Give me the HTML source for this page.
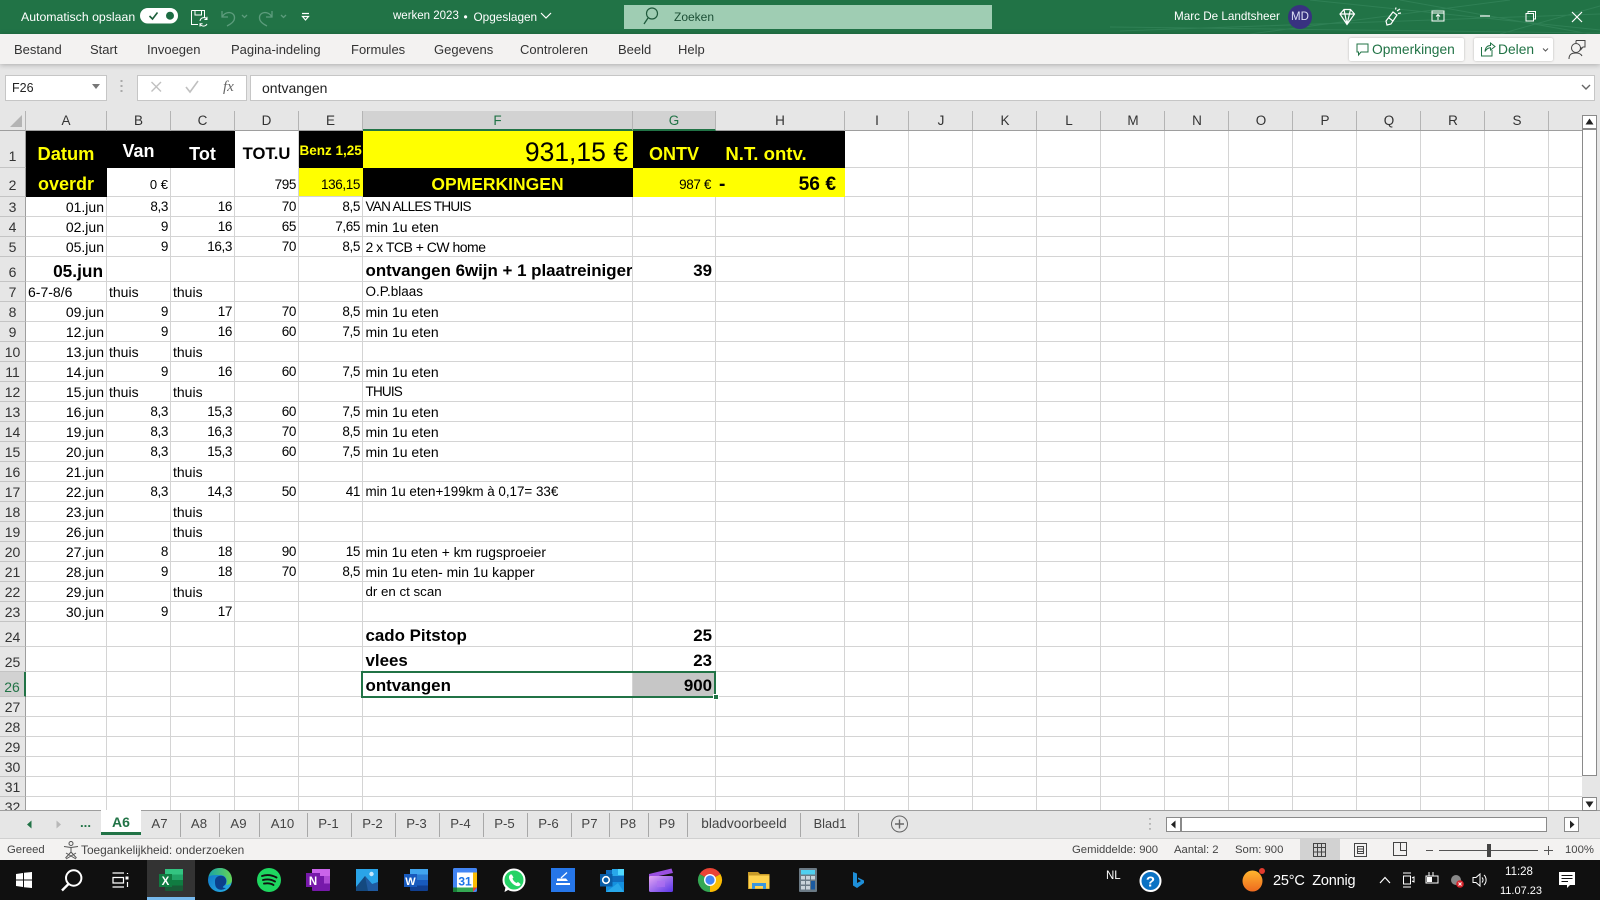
<!DOCTYPE html>
<html lang="nl">
<head>
<meta charset="utf-8">
<title>werken 2023 - Excel</title>
<style>
*{box-sizing:border-box}
html,body{margin:0;padding:0;width:1600px;height:900px;overflow:hidden;background:#e6e6e6;font-family:"Liberation Sans",sans-serif;color:#000}
.a{position:absolute;white-space:nowrap}
#title{position:absolute;left:0;top:0;width:1600px;height:34px;background:#217346;color:#fff;font-size:12.3px}
#ribbon{position:absolute;left:0;top:34px;width:1600px;height:30px;background:#f3f2f1;box-shadow:0 1px 5px rgba(0,0,0,.25);font-size:13px;color:#333;z-index:2}
#ribbon .a{top:8px}
.btn{position:absolute;top:3.5px;height:23px;background:#fff;border-radius:2px;box-shadow:0 0 2px rgba(0,0,0,.25);color:#217346;font-size:13.8px;line-height:23px}
#fbar{position:absolute;left:0;top:64px;width:1600px;height:47px;background:#e6e6e6}
.box{position:absolute;top:11px;height:26px;background:#fff;border:1px solid #c6c6c6}
#grid{position:absolute;left:0;top:111px;width:1582px;height:699px;overflow:hidden;background:#fff}
table{border-collapse:separate;border-spacing:0;table-layout:fixed;width:1582px}
td,th{padding:0 2px;overflow:hidden;white-space:nowrap;font-weight:normal}
td{border-right:1px solid #d4d4d4;border-bottom:1px solid #d4d4d4;font-size:13.5px;letter-spacing:-.38px;text-align:right;vertical-align:middle;line-height:16px}
thead th{height:20px;background:#e6e6e6;border-right:1px solid #b4b4b4;border-bottom:1px solid #9e9e9e;font-size:13.5px;color:#333;text-align:center;line-height:18px}
tbody th{background:#e6e6e6;border-right:1px solid #9e9e9e;border-bottom:1px solid #c4c4c4;font-size:14px;color:#333;text-align:center;line-height:16px;padding:0}
tr.h25 th{padding-top:5px}
thead th.s{background:#d2d2d2;color:#217346;border-bottom:2px solid #217346;border-right-color:#b4b4b4}
thead th.s span{position:relative;top:1px}
tbody th.s{background:#d2d2d2;color:#217346;border-right:2px solid #217346}
.r{background:repeating-linear-gradient(to right,transparent 0,transparent 63px,#d4d4d4 63px,#d4d4d4 64px);border-right:0}
tr{height:20px}
tr.h25{height:25px}
.t{font-size:14px;letter-spacing:0}
.l{text-align:left;font-size:14px;padding-left:2.5px;letter-spacing:0}
.b{font-weight:bold;font-size:16.9px;padding-top:4px;letter-spacing:0}
.bk{background:#000;border-color:#000}
.yl{background:#ffff00;border-color:#ffff00}
.yt{color:#ffff00;font-weight:bold;letter-spacing:0}
.wt{color:#fff;font-weight:bold;letter-spacing:0}
.c{text-align:center}
#tabs{position:absolute;left:0;top:810px;width:1600px;height:28px;background:#e6e6e6;border-top:1px solid #9e9e9e;font-size:13.2px;color:#444}
#tabs .tab{position:absolute;top:2px;height:24px;line-height:22px;text-align:center;border-right:1px solid #a8a8a8;padding-right:2px}
#status{position:absolute;left:0;top:838px;width:1600px;height:22px;background:#f3f2f1;border-top:1px solid #d0d0d0;font-size:11.3px;color:#444;line-height:23px}
#taskbar{position:absolute;left:0;top:860px;width:1600px;height:40px;background:#101010;color:#fff}
svg{position:absolute;left:0;top:0;overflow:visible}
</style>
</head>
<body>

<div id="title">
<svg width="1600" height="34" fill="none" stroke="#2f8055" stroke-width="1">
<path d="M1110 27 L1600 33 M1120 31 L1600 14 M1310 0 L1600 30 M1400 0 L1590 34 M1250 34 L1510 0 M1500 34 L1600 6"/>
</svg>
<div class="a" style="left:21px;top:10px">Automatisch opslaan</div>
<svg width="400" height="34" fill="none">
<rect x="140" y="8" width="38" height="15.5" rx="7.75" fill="#fff"/>
<path d="M149.5 16 L152.5 19 L157.5 12.5" stroke="#1c5e3a" stroke-width="1.6"/>
<circle cx="170" cy="15.7" r="4" fill="#1c6b42"/>
<path d="M191.5 10.5 H204.5 V18 M191.5 10.5 V24.5 H198 M195 10.5 V15 H201.5 V10.5" stroke="#fff" stroke-width="1"/>
<path d="M200 21 a4 4 0 0 1 7 -2 M207 24 a4 4 0 0 1 -7 0 M207 16.8 V19.5 H204.4 M200 26.5 V23.8 H202.6" stroke="#fff" stroke-width="1"/>
<g stroke="#5c9c7c" stroke-width="1.3">
<path d="M222 11 V17 H228 M222 17 C226 10 235 12 234.5 18 C234.5 21 231 24 227 26"/>
<path d="M242 15 L244.5 17.5 L247 15"/>
<path d="M272 11 V17 H266 M272 17 C268 10 259 12 259.5 18 C259.5 21 263 24 267 26"/>
<path d="M281 15 L283.5 17.5 L286 15"/>
</g>
<path d="M302 13.5 H309 M302.5 16.5 L305.5 20 L308.5 16.5 Z" stroke="#fff" stroke-width="1.2"/>
</svg>
<div class="a" style="left:393px;top:10px;font-size:11.5px">werken 2023</div>
<div class="a" style="left:463.5px;top:10px;font-size:11.8px">•</div>
<div class="a" style="left:473.5px;top:10px;font-size:11.8px">Opgeslagen</div>
<svg width="600" height="34" fill="none"><path d="M541 13 L546 18 L551 13" stroke="#fff" stroke-width="1.2"/></svg>
<div class="a" style="left:624px;top:5px;width:368px;height:24px;background:#9fcdb3"></div>
<svg width="700" height="34" fill="none"><circle cx="652" cy="13.5" r="5.5" stroke="#1f5a3c" stroke-width="1.2"/><path d="M648 18 L644 24" stroke="#1f5a3c" stroke-width="1.3"/></svg>
<div class="a" style="left:674px;top:10px;color:#1c4f36;font-size:12px">Zoeken</div>
<div class="a" style="left:1174px;top:10px;font-size:11.7px">Marc De Landtsheer</div>
<div class="a" style="left:1288px;top:5px;width:24px;height:24px;border-radius:50%;background:#383280;color:#dfe0f5;font-size:11.5px;line-height:24px;text-align:center">MD</div>
<svg width="1600" height="34" fill="none" stroke="#fff" stroke-width="1.2">
<path d="M1340 14 L1344 9.5 H1350.5 L1354.5 14 L1347 24.5 Z M1340 14 H1354.5 M1344 9.5 L1347 24.5 L1350.5 9.5"/>
<path d="M1386 21 L1393 12 L1397 15 L1391 24 L1387 25 Z M1389 18 L1393 21 M1397 11 L1400 9 M1398 13.5 L1401 13 M1395.5 9.5 L1396 7.5"/>
<path d="M1432 11 H1444 V21 H1432 Z M1432 13 H1444 M1438 20 V15 M1436 16.5 L1438 14.5 L1440 16.5" stroke-width="1"/>
<path d="M1480 16 H1490"/>
<path d="M1526 13.5 H1533.5 V21 H1526 Z M1528 13.5 V11.5 H1535.5 V19 H1533.5" stroke-width="1"/>
<path d="M1572 12 L1582 22 M1582 12 L1572 22"/>
</svg>
</div>

<div id="ribbon">
<div class="a" style="left:14px">Bestand</div>
<div class="a" style="left:90px">Start</div>
<div class="a" style="left:147px">Invoegen</div>
<div class="a" style="left:231px">Pagina-indeling</div>
<div class="a" style="left:351px">Formules</div>
<div class="a" style="left:434px">Gegevens</div>
<div class="a" style="left:520px">Controleren</div>
<div class="a" style="left:618px">Beeld</div>
<div class="a" style="left:678px">Help</div>
<div class="btn" style="left:1349px;width:115px;padding-left:23px">Opmerkingen</div>
<div class="btn" style="left:1474px;width:79px;padding-left:24px">Delen</div>
<svg width="1600" height="30" fill="none" stroke-width="1">
<path d="M1357 10 H1368 V18 H1361 L1358.5 21 V18 H1357 Z" stroke="#217346"/>
<path d="M1481.5 13 V22 H1492 V16 M1485 17.5 C1485.5 13 1488 11.5 1490.5 11.5 V9 L1495 12.5 L1490.5 16 V13.8 C1488.5 13.8 1486.5 15 1485 17.5 Z" stroke="#217346"/>
<path d="M1543 14.5 L1545.5 17 L1548 14.5" stroke="#555"/>
<g stroke="#444"><circle cx="1576" cy="14" r="4.5"/><path d="M1569 25 C1569 20 1572 19 1576 19 C1579 19 1581 20 1582 22 M1576 6.5 H1585 V13 H1583 L1581 15.5 V13 M1576 6.5 V9"/></g>
</svg>
</div>

<div id="fbar">
<div class="box" style="left:5px;width:102px"></div>
<div class="a" style="left:12px;top:16.5px;font-size:12.5px;color:#222">F26</div>
<div class="box" style="left:137px;width:110px"></div>
<div class="box" style="left:250px;width:1345px"></div>
<div class="a" style="left:262px;top:16px;font-size:14px;color:#222">ontvangen</div>
<div class="a" style="left:223px;top:15px;font:italic 15px 'Liberation Serif',serif;color:#666">fx</div>
<svg width="1600" height="47" fill="none">
<path d="M92 20 H100 L96 25 Z" fill="#777"/>
<path d="M121.5 16 v2 M121.5 21 v2 M121.5 26 v2" stroke="#aaa" stroke-width="2"/>
<path d="M151.5 18 L161 27.5 M161 18 L151.5 27.5" stroke="#c0c0c0" stroke-width="1.4"/>
<path d="M186 23 L190 28 L198 17" stroke="#c0c0c0" stroke-width="1.6"/>
<path d="M1582 21 L1586 25 L1590 21" stroke="#666" stroke-width="1.4"/>
</svg>
</div>

<div id="grid">
<table>
<colgroup><col style="width:26px"><col style="width:81px"><col style="width:64px"><col style="width:64px"><col style="width:64px"><col style="width:64px"><col style="width:270px"><col style="width:83px"><col style="width:129px"><col style="width:737px"></colgroup>
<thead><tr>
<th></th><th>A</th><th>B</th><th>C</th><th>D</th><th>E</th><th class="s"><span>F</span></th><th class="s"><span>G</span></th><th>H</th>
<th style="padding:0;border-right:0;text-align:left;background:repeating-linear-gradient(to right,#e6e6e6 0,#e6e6e6 63px,#b4b4b4 63px,#b4b4b4 64px)"><div style="display:flex;width:704px;line-height:18px"><span style="width:64px;text-align:center">I</span><span style="width:64px;text-align:center">J</span><span style="width:64px;text-align:center">K</span><span style="width:64px;text-align:center">L</span><span style="width:64px;text-align:center">M</span><span style="width:64px;text-align:center">N</span><span style="width:64px;text-align:center">O</span><span style="width:64px;text-align:center">P</span><span style="width:64px;text-align:center">Q</span><span style="width:64px;text-align:center">R</span><span style="width:64px;text-align:center">S</span></div></th>
</tr></thead>
<tbody>
<tr style="height:37px"><th style="padding-top:14px">1</th>
<td class="bk yt c" style="font-size:18.3px;padding-top:10px">Datum</td>
<td class="bk wt c" style="font-size:18px;padding-top:4px">Van</td>
<td class="bk wt c" style="font-size:18px;padding-top:10px">Tot</td>
<td class="c" style="font-size:16.6px;font-weight:bold;padding-top:10px;border-bottom-color:#fff;letter-spacing:0">TOT.U</td>
<td class="bk yt" style="font-size:13.5px;text-align:left;padding:3px 0 0 .5px">Benz 1,25</td>
<td class="yl" style="font-size:26.5px;padding:6px 4px 0 0;line-height:30px;letter-spacing:0">931,15 €</td>
<td class="bk yt c" style="font-size:18px;padding-top:10px">ONTV</td>
<td class="bk yt c" style="font-size:18.6px;padding:10px 28px 0 0">N.T. ontv.</td>
<td class="r"></td></tr>
<tr style="height:29px"><th style="padding-top:6px">2</th>
<td class="bk yt c" style="font-size:18px;padding-top:4px">overdr</td>
<td style="padding-top:6px;font-size:13px;letter-spacing:0">0 €</td>
<td></td>
<td style="padding-top:5px">795</td>
<td class="yl" style="padding-top:5px;border-bottom-color:#d4d4d4">136,15</td>
<td class="bk yt c" style="font-size:17.5px;padding-top:4px">OPMERKINGEN</td>
<td class="yl" style="padding:5px 4px 0 0">987 €</td>
<td class="yl" style="font-size:19.2px;font-weight:bold;padding:6px 8px 0 0;letter-spacing:0"><span style="float:left;padding-left:3px">-</span>56 €</td>
<td class="r"></td></tr>
<tr><th>3</th><td class="t">01.jun</td><td>8,3</td><td>16</td><td>70</td><td>8,5</td><td class="l" style="font-size:13.5px;letter-spacing:-.7px">VAN ALLES THUIS</td><td></td><td></td><td class="r"></td></tr>
<tr><th>4</th><td class="t">02.jun</td><td>9</td><td>16</td><td>65</td><td>7,65</td><td class="l">min 1u eten</td><td></td><td></td><td class="r"></td></tr>
<tr><th>5</th><td class="t">05.jun</td><td>9</td><td>16,3</td><td>70</td><td>8,5</td><td class="l" style="letter-spacing:-.5px">2 x TCB + CW home</td><td></td><td></td><td class="r"></td></tr>
<tr class="h25"><th>6</th><td class="b" style="font-size:17.3px;padding-right:3px">05.jun</td><td></td><td></td><td></td><td></td><td class="l b">ontvangen 6wijn + 1 plaatreiniger</td><td class="b" style="padding-right:3px">39</td><td></td><td class="r"></td></tr>
<tr><th>7</th><td class="l" style="padding-left:2px">6-7-8/6</td><td class="l" style="padding-left:2px">thuis</td><td class="l" style="padding-left:2px">thuis</td><td></td><td></td><td class="l" style="font-size:13.5px">O.P.blaas</td><td></td><td></td><td class="r"></td></tr>
<tr><th>8</th><td class="t">09.jun</td><td>9</td><td>17</td><td>70</td><td>8,5</td><td class="l">min 1u eten</td><td></td><td></td><td class="r"></td></tr>
<tr><th>9</th><td class="t">12.jun</td><td>9</td><td>16</td><td>60</td><td>7,5</td><td class="l">min 1u eten</td><td></td><td></td><td class="r"></td></tr>
<tr><th>10</th><td class="t">13.jun</td><td class="l" style="padding-left:2px">thuis</td><td class="l" style="padding-left:2px">thuis</td><td></td><td></td><td></td><td></td><td></td><td class="r"></td></tr>
<tr><th>11</th><td class="t">14.jun</td><td>9</td><td>16</td><td>60</td><td>7,5</td><td class="l">min 1u eten</td><td></td><td></td><td class="r"></td></tr>
<tr><th>12</th><td class="t">15.jun</td><td class="l" style="padding-left:2px">thuis</td><td class="l" style="padding-left:2px">thuis</td><td></td><td></td><td class="l" style="font-size:13.5px;letter-spacing:-.8px">THUIS</td><td></td><td></td><td class="r"></td></tr>
<tr><th>13</th><td class="t">16.jun</td><td>8,3</td><td>15,3</td><td>60</td><td>7,5</td><td class="l">min 1u eten</td><td></td><td></td><td class="r"></td></tr>
<tr><th>14</th><td class="t">19.jun</td><td>8,3</td><td>16,3</td><td>70</td><td>8,5</td><td class="l">min 1u eten</td><td></td><td></td><td class="r"></td></tr>
<tr><th>15</th><td class="t">20.jun</td><td>8,3</td><td>15,3</td><td>60</td><td>7,5</td><td class="l">min 1u eten</td><td></td><td></td><td class="r"></td></tr>
<tr><th>16</th><td class="t">21.jun</td><td></td><td class="l" style="padding-left:2px">thuis</td><td></td><td></td><td></td><td></td><td></td><td class="r"></td></tr>
<tr><th>17</th><td class="t">22.jun</td><td>8,3</td><td>14,3</td><td>50</td><td>41</td><td class="l" style="font-size:13.4px">min 1u eten+199km à 0,17= 33€</td><td></td><td></td><td class="r"></td></tr>
<tr><th>18</th><td class="t">23.jun</td><td></td><td class="l" style="padding-left:2px">thuis</td><td></td><td></td><td></td><td></td><td></td><td class="r"></td></tr>
<tr><th>19</th><td class="t">26.jun</td><td></td><td class="l" style="padding-left:2px">thuis</td><td></td><td></td><td></td><td></td><td></td><td class="r"></td></tr>
<tr><th>20</th><td class="t">27.jun</td><td>8</td><td>18</td><td>90</td><td>15</td><td class="l" style="font-size:13.85px">min 1u eten + km rugsproeier</td><td></td><td></td><td class="r"></td></tr>
<tr><th>21</th><td class="t">28.jun</td><td>9</td><td>18</td><td>70</td><td>8,5</td><td class="l" style="font-size:13.9px">min 1u eten- min 1u kapper</td><td></td><td></td><td class="r"></td></tr>
<tr><th>22</th><td class="t">29.jun</td><td></td><td class="l" style="padding-left:2px">thuis</td><td></td><td></td><td class="l" style="font-size:13.3px">dr en ct scan</td><td></td><td></td><td class="r"></td></tr>
<tr><th>23</th><td class="t">30.jun</td><td>9</td><td>17</td><td></td><td></td><td></td><td></td><td></td><td class="r"></td></tr>
<tr class="h25"><th>24</th><td></td><td></td><td></td><td></td><td></td><td class="l b">cado Pitstop</td><td class="b" style="padding-right:3px">25</td><td></td><td class="r"></td></tr>
<tr class="h25"><th>25</th><td></td><td></td><td></td><td></td><td></td><td class="l b">vlees</td><td class="b" style="padding-right:3px">23</td><td></td><td class="r"></td></tr>
<tr class="h25"><th class="s">26</th><td></td><td></td><td></td><td></td><td></td><td class="l b" style="padding-top:4px">ontvangen</td><td class="b" style="padding:4px 3px 0 2px;background:#c6c6c6">900</td><td></td><td class="r"></td></tr>
<tr><th>27</th><td></td><td></td><td></td><td></td><td></td><td></td><td></td><td></td><td class="r"></td></tr>
<tr><th>28</th><td></td><td></td><td></td><td></td><td></td><td></td><td></td><td></td><td class="r"></td></tr>
<tr><th>29</th><td></td><td></td><td></td><td></td><td></td><td></td><td></td><td></td><td class="r"></td></tr>
<tr><th>30</th><td></td><td></td><td></td><td></td><td></td><td></td><td></td><td></td><td class="r"></td></tr>
<tr><th>31</th><td></td><td></td><td></td><td></td><td></td><td></td><td></td><td></td><td class="r"></td></tr>
<tr><th>32</th><td></td><td></td><td></td><td></td><td></td><td></td><td></td><td></td><td class="r"></td></tr>
</tbody>
</table>
<svg width="40" height="24" style="left:0;top:0"><path d="M22 4 V16 H10 Z" fill="#b4b4b4"/></svg>
<div class="a" style="left:361px;top:560px;width:355px;height:26.5px;border:2px solid #217346;background:transparent"></div>
<div class="a" style="left:713px;top:583px;width:6px;height:6px;background:#217346;border:1px solid #fff"></div>
</div>

<div class="a" style="left:1582px;top:111px;width:18px;height:699px;background:#e6e6e6"></div>
<svg width="1600" height="900" fill="none" style="z-index:1;pointer-events:none">
<rect x="1582.5" y="115.5" width="14" height="13" fill="#fff" stroke="#8a8a8a"/>
<path d="M1585.5 124.5 H1593.5 L1589.5 118.5 Z" fill="#222"/>
<rect x="1582.5" y="129.5" width="14" height="646" fill="#fff" stroke="#8a8a8a"/>
<rect x="1582.5" y="797.5" width="14" height="13" fill="#fff" stroke="#8a8a8a"/>
<path d="M1585.5 801.5 H1593.5 L1589.5 807.5 Z" fill="#222"/>
</svg>

<div id="tabs">
<svg width="1600" height="28" fill="none">
<path d="M31.5 9.5 V17.5 L27 13.5 Z" fill="#217346"/>
<path d="M56.5 9.5 V17.5 L61 13.5 Z" fill="#b8b8b8"/>
<circle cx="899.5" cy="13" r="8" stroke="#666"/><path d="M895 13 H904 M899.5 8.5 V17.5" stroke="#666" stroke-width="1.4"/>
<path d="M1150 7 v1.8 M1150 12 v1.8 M1150 17 v1.8" stroke="#aaa" stroke-width="1.6"/>
<rect x="1166.5" y="6.5" width="14" height="14" fill="#fff" stroke="#8a8a8a"/><path d="M1175.5 9.5 V17.5 L1171 13.5 Z" fill="#222"/>
<rect x="1181.5" y="6.5" width="365" height="14" fill="#fff" stroke="#8a8a8a"/>
<rect x="1564.5" y="6.5" width="14" height="14" fill="#fff" stroke="#8a8a8a"/><path d="M1570 9.5 V17.5 L1574.5 13.5 Z" fill="#222"/>
</svg>
<div class="a" style="left:80px;top:4px;font-weight:bold;color:#217346">...</div>
<div class="a" style="left:101px;top:-1px;width:40px;height:25px;background:#fff;border-bottom:3px solid #217346;color:#217346;font-weight:bold;font-size:14px;text-align:center;line-height:25px">A6</div>
<div class="tab" style="left:141px;width:40px">A7</div>
<div class="tab" style="left:181px;width:39px">A8</div>
<div class="tab" style="left:220px;width:40px">A9</div>
<div class="tab" style="left:260px;width:48px">A10</div>
<div class="tab" style="left:308px;width:44px">P-1</div>
<div class="tab" style="left:352px;width:44px">P-2</div>
<div class="tab" style="left:396px;width:44px">P-3</div>
<div class="tab" style="left:440px;width:44px">P-4</div>
<div class="tab" style="left:484px;width:44px">P-5</div>
<div class="tab" style="left:528px;width:44px">P-6</div>
<div class="tab" style="left:572px;width:38px">P7</div>
<div class="tab" style="left:610px;width:39px">P8</div>
<div class="tab" style="left:649px;width:39px">P9</div>
<div class="tab" style="left:688px;width:113px;font-size:13.6px;padding-right:0">bladvoorbeeld</div>
<div class="tab" style="left:801px;width:58px;padding:0 0 0 1px;font-size:12.8px">Blad1</div>
</div>

<div id="status">
<div class="a" style="left:7px">Gereed</div>
<svg width="100" height="22" fill="none" stroke="#555"><circle cx="71" cy="4.5" r="2"/><path d="M64 7.5 L71 8.5 L78 7.5 M71 8.5 V13 L65.5 19 M71 13 L76.5 19 M66 14 L76 20 M76 14 L66 20" stroke-width="1"/></svg>
<div class="a" style="left:81px;font-size:11.9px">Toegankelijkheid: onderzoeken</div>
<div class="a" style="left:1072px">Gemiddelde: 900</div>
<div class="a" style="left:1174px">Aantal: 2</div>
<div class="a" style="left:1235px">Som: 900</div>
<div class="a" style="left:1300px;top:0;width:40px;height:21px;background:#d2d2d2"></div>
<svg width="1600" height="22" fill="none" stroke="#444">
<path d="M1313.5 4.5 H1325.5 V17.5 H1313.5 Z M1313.5 8.5 H1325.5 M1313.5 13 H1325.5 M1317.5 4.5 V17.5 M1321.5 4.5 V17.5"/>
<path d="M1354.5 4.5 H1366.5 V17.5 H1354.5 Z M1357.5 7.5 H1363.5 V14.5 H1357.5 Z M1358 10 H1363 M1358 12.5 H1363"/>
<path d="M1393.5 3.5 H1406.5 V16.5 H1393.5 Z M1400.5 3.5 V11.5 H1406.5"/>
<path d="M1426 11.5 H1433 M1439 11.5 H1538 M1544 11.5 H1553 M1548.5 7 V16" stroke="#555"/>
<rect x="1487" y="5" width="4" height="13" fill="#444" stroke="none"/>
</svg>
<div class="a" style="left:1565px">100%</div>
</div>

<div id="taskbar">
<div class="a" style="left:147px;top:0;width:48px;height:40px;background:#333;border-bottom:3px solid #76b9ed"></div>
<svg width="1600" height="40" fill="none">
<defs>
<linearGradient id="eg" x1="0" y1="0" x2="1" y2="1"><stop offset="0" stop-color="#0d6fc4"/><stop offset="1" stop-color="#29b2e6"/></linearGradient>
<linearGradient id="eg2" x1="0" y1="0" x2="1" y2="0"><stop offset="0" stop-color="#1aa3a6"/><stop offset="1" stop-color="#66d455"/></linearGradient>
<linearGradient id="ws" x1="0" y1="0" x2="0" y2="1"><stop offset="0" stop-color="#ffb52e"/><stop offset="1" stop-color="#ee6a1f"/></linearGradient>
<linearGradient id="cc" x1="0" y1="0" x2="1" y2="1"><stop offset="0" stop-color="#e6a6f4"/><stop offset="1" stop-color="#5a36e8"/></linearGradient>
</defs>
<path d="M16 14 L23 13 V19.5 H16 Z M24 12.8 L32 12 V19.5 H24 Z M16 20.5 H23 V27 L16 26 Z M24 20.5 H32 V28 L24 27.2 Z" fill="#fff"/>
<circle cx="73.7" cy="18" r="7.7" stroke="#fff" stroke-width="2"/><path d="M68.5 24 L62 30.5" stroke="#fff" stroke-width="2.4"/>
<path d="M112.5 13 H124 M112.5 27 H124 M113 17.5 H123.5 V23 H113 Z M127.5 13 V14 M127.5 22 V27" stroke="#fff" stroke-width="1.2"/><rect x="125.5" y="16.5" width="3" height="3" fill="#fff"/>
<rect x="165" y="9" width="18" height="22" rx="1" fill="#185c37"/><rect x="165" y="9" width="18" height="5.5" fill="#33c481"/><rect x="165" y="14.5" width="18" height="5.5" fill="#21a366"/><rect x="165" y="20" width="18" height="5.5" fill="#107c41"/><rect x="159" y="14" width="13" height="13" fill="#107c41"/>
<text x="165.5" y="25" fill="#fff" font-size="11.5" font-weight="bold" text-anchor="middle" font-family="Liberation Sans,sans-serif">X</text>
<circle cx="220" cy="20" r="12" fill="url(#eg)"/><path d="M208.5 17 C210 10 215 8 220 8 C227 8 232 13 232 20 C232 24 228 25 226 25 C228 20 226 15 220 15 C215 15 210 15 208.5 17 Z" fill="url(#eg2)"/><path d="M215 21 C215 17 219 15 223 16 C227 18 227 22 225 25 C222 27 222 28 226 28 C222 31 217 30 215.5 26 C215 24.5 215 22.5 215 21 Z" fill="#0b3f8c"/>
<circle cx="269" cy="20" r="12" fill="#1ed760"/><path d="M262 16 C266.5 14.5 272 15 276.5 17.5 M263 20 C267 19 271.5 19.5 275 21.5 M264 23.6 C267.5 23 271 23.3 273.5 25" stroke="#111" stroke-width="1.9" stroke-linecap="round"/>
<rect x="312" y="9" width="18" height="22" rx="1" fill="#7719aa"/><rect x="320" y="9" width="10" height="7" fill="#ca64ea"/><rect x="312" y="9" width="8" height="4" fill="#ca64ea"/><rect x="324" y="16" width="6" height="7.5" fill="#ae4bd5"/><rect x="306" y="13" width="14" height="14" fill="#7719aa"/>
<text x="313" y="24.8" fill="#fff" font-size="11.5" font-weight="bold" text-anchor="middle" font-family="Liberation Sans,sans-serif">N</text>
<rect x="356" y="9" width="22" height="22" fill="#2aa4e8"/><path d="M356 27 L365 16 L372 24 L378 27 V31 H356 Z" fill="#14497f"/><path d="M365 16 L372 24 L378 22 V31 H368 Z" fill="#1f5aa0"/><circle cx="371.5" cy="14" r="2.2" fill="#c6e7fb"/>
<rect x="410" y="9" width="18" height="22" rx="1" fill="#103f91"/><rect x="410" y="9" width="18" height="5.5" fill="#41a5ee"/><rect x="410" y="14.5" width="18" height="5.5" fill="#2b7cd3"/><rect x="410" y="20" width="18" height="5.5" fill="#185abd"/><rect x="404" y="14" width="13" height="13" fill="#185abd"/>
<text x="410.5" y="25" fill="#fff" font-size="11" font-weight="bold" text-anchor="middle" font-family="Liberation Sans,sans-serif">W</text>
<rect x="453" y="8" width="24" height="24" rx="1.5" fill="#4285f4"/><rect x="457" y="12.5" width="16" height="15" fill="#fff"/><rect x="473" y="12.5" width="4" height="15" fill="#fbbc04"/><rect x="457" y="27.5" width="16" height="4.5" fill="#34a853"/><rect x="453" y="27.5" width="4" height="4.5" fill="#188038"/><path d="M473 27.5 H477 L473 32 Z" fill="#ea4335"/>
<text x="465" y="25.5" fill="#1a73e8" font-size="12" font-weight="bold" text-anchor="middle" font-family="Liberation Sans,sans-serif">31</text>
<circle cx="514" cy="20" r="10.5" fill="#25d366" stroke="#fff" stroke-width="2"/><path d="M504.5 32 L506 25 L510 29 Z" fill="#fff"/><path d="M510.5 14.5 C509 15.5 508.5 17 509.5 19.5 C511 22.5 513.5 25 516.5 26 C519 26.5 520.5 25.5 520.5 24 L518 22 L516.5 23 C514.5 22 513 20.5 512.5 18.5 L513.5 17.5 L511.8 14.5 Z" fill="#fff"/>
<rect x="551" y="8" width="24" height="24" fill="#2676e8"/><path d="M556 23 H570 V25 H556 Z M557 18.5 H566 L568 21 H557 Z" fill="#fff"/><path d="M561 18 L567 12.5" stroke="#fff" stroke-width="1.2"/>
<path d="M606 10 H624 V22 L614 27 H606 Z" fill="#0f6cbd"/><path d="M612 9 H624 V16 H612 Z" fill="#28a8ea"/><rect x="618" y="9" width="6" height="6" fill="#50d9ff"/><path d="M606 22 L624 22 V32 H606 Z" fill="#1490df"/><path d="M606 32 L618 23 L624 32 Z" fill="#28a8ea"/><rect x="600" y="14" width="12.5" height="12.5" fill="#0a5ea8"/><circle cx="606" cy="20" r="3.3" stroke="#fff" stroke-width="1.6"/>
<path d="M649 14 L671.5 8.5 L673 13 L649 18 Z" fill="#9a4fe0"/><rect x="649" y="16" width="24" height="16" rx="1.5" fill="url(#cc)"/><rect x="657" y="21" width="8" height="6" fill="#b070f2" opacity=".6"/>
<path d="M710 20 L699.6 14 A12 12 0 0 1 720.4 14 Z" fill="#ea4335"/><path d="M710 20 L720.4 14 A12 12 0 0 1 710 32 Z" fill="#fbbc04"/><path d="M710 20 L710 32 A12 12 0 0 1 699.6 14 Z" fill="#34a853"/><circle cx="710" cy="20" r="6" fill="#fff"/><circle cx="710" cy="20" r="4.6" fill="#4285f4"/>
<path d="M748 12 H758 L760 14 H769.5 V29 H748 Z" fill="#c89b28"/><rect x="749" y="15.5" width="20.5" height="13" fill="#ffd34f"/><path d="M752 29 V23 H766 V29 H763 V26 H755 V29 Z" fill="#3a96dd"/>
<rect x="799" y="8" width="18" height="24" rx="1" fill="#6b7a85"/><rect x="801" y="10" width="14" height="4.5" fill="#50d0f0"/><g fill="#c9d3da"><rect x="801" y="16" width="4" height="3.5"/><rect x="806" y="16" width="4" height="3.5"/><rect x="811" y="16" width="4" height="3.5"/><rect x="801" y="21" width="4" height="3.5"/><rect x="806" y="21" width="4" height="3.5"/><rect x="801" y="26" width="4" height="3.5"/><rect x="806" y="26" width="4" height="3.5"/></g><rect x="811" y="21" width="4" height="8.5" fill="#1a5aa0"/>
<path d="M853 12 L857 13.5 V23 L861 21 L858 19 L858 17.5 L864 20.5 V23 L857 28 L853 25.5 Z" fill="#1e8fd9"/>
<circle cx="1150.5" cy="21" r="10" fill="#0b72c4" stroke="#fff" stroke-width="2"/>
<text x="1150.5" y="26.5" fill="#fff" font-size="15" font-weight="bold" text-anchor="middle" font-family="Liberation Sans,sans-serif">?</text>
<ellipse cx="1252.5" cy="21" rx="10" ry="10.5" fill="url(#ws)"/><circle cx="1262" cy="11" r="3" fill="#e23b2e"/>
<path d="M1380 23 L1385 17.5 L1390 23" stroke="#fff" stroke-width="1.2"/>
<path d="M1403 13 H1411 M1403 27 H1411 M1403.5 16 H1410.5 V24 H1403.5 Z M1412 18 L1414 17 V22 L1412 21" stroke="#fff" stroke-width="1"/>
<path d="M1426 16 H1438 V23 H1426 Z M1429 12 V16 M1433 12 V16" stroke="#fff" stroke-width="1"/><rect x="1427" y="17" width="5" height="5" fill="#fff"/>
<circle cx="1456" cy="20" r="5" fill="#888"/><circle cx="1460" cy="24" r="3.8" fill="#d8232a"/><path d="M1458.5 22.5 L1461.5 25.5 M1461.5 22.5 L1458.5 25.5" stroke="#fff"/>
<path d="M1473 17.5 H1476 L1480 14 V26 L1476 22.5 H1473 Z M1482 17.5 A3.5 3.5 0 0 1 1482 22.5 M1484 15 A7 7 0 0 1 1484 25" stroke="#fff" stroke-width="1"/>
<path d="M1559 12 H1575 V25 H1570 L1567 28 V25 H1559 Z" fill="#fff"/><path d="M1561.5 15.5 H1572.5 M1561.5 18.5 H1572.5 M1561.5 21.5 H1568" stroke="#101010"/>
</svg>
<div class="a" style="left:1106px;top:10px;font-size:11.5px">NL</div>
<div class="a" style="left:1273px;top:13px;font-size:14.5px;letter-spacing:-.2px">25°C&nbsp; Zonnig</div>
<div class="a" style="left:1499px;top:6px;width:40px;text-align:center;font-size:11.5px">11:28</div>
<div class="a" style="left:1496px;top:25px;width:50px;text-align:center;font-size:11px">11.07.23</div>
</div>

</body>
</html>
